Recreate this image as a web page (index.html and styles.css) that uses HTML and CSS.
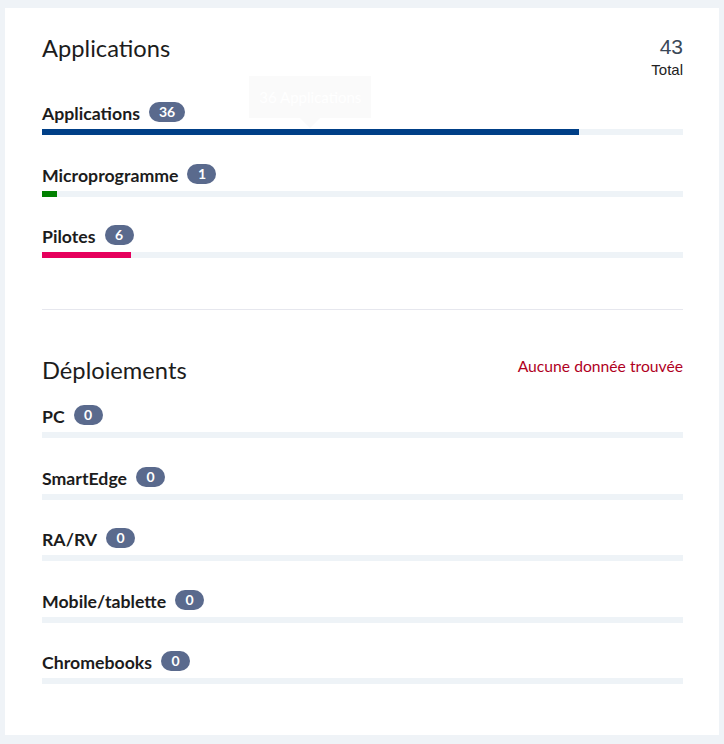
FILE: index.html
```html
<!DOCTYPE html>
<html lang="fr">
<head>
  <meta charset="UTF-8">
  <title>Applications</title>
  <link rel="stylesheet" href="styles.css">
</head>
<body>

  <div class="card">
    <section class="section section-apps">
      <div class="section-head">
        <h2>Applications</h2>
        <div class="stat">
          <div class="stat-value">43</div>
          <div class="stat-label">Total</div>
        </div>
      </div>

      <div class="rows">
        <div class="row">
          <div class="row-label">Applications <span class="badge">36</span></div>
          <div class="track">
            <div class="fill fill-blue" style="width: 83.72%">
              <div class="tooltip">36 Applications</div>
            </div>
          </div>
        </div>
        <div class="row">
          <div class="row-label">Microprogramme <span class="badge">1</span></div>
          <div class="track"><div class="fill fill-green" style="width: 2.33%"></div></div>
        </div>
        <div class="row">
          <div class="row-label">Pilotes <span class="badge">6</span></div>
          <div class="track"><div class="fill fill-pink" style="width: 13.95%"></div></div>
        </div>
      </div>
    </section>

    <section class="section section-deploy">
      <div class="section-head">
        <h2>Déploiements</h2>
        <div class="empty">Aucune donnée trouvée</div>
      </div>

      <div class="rows">
        <div class="row">
          <div class="row-label">PC <span class="badge">0</span></div>
          <div class="track"></div>
        </div>
        <div class="row">
          <div class="row-label">SmartEdge <span class="badge">0</span></div>
          <div class="track"></div>
        </div>
        <div class="row">
          <div class="row-label">RA/RV <span class="badge">0</span></div>
          <div class="track"></div>
        </div>
        <div class="row">
          <div class="row-label">Mobile/tablette <span class="badge">0</span></div>
          <div class="track"></div>
        </div>
        <div class="row">
          <div class="row-label">Chromebooks <span class="badge">0</span></div>
          <div class="track"></div>
        </div>
      </div>
    </section>
  </div>

</body>
</html>
```

FILE: styles.css
```css
* {
  box-sizing: border-box;
}

body {
  margin: 8px 5px;
  background: #eff3f7;
  font-family: 'Lato', 'Open Sans', sans-serif;
  color: #1c1c1c;
}

.card {
  background: #ffffff;
  box-shadow: 0 1px 4px rgba(0, 0, 0, 0.12);
  padding: 0 36px 51px 37px;
}

.section-apps {
  padding-top: 27px;
  padding-bottom: 51px;
  border-bottom: 1px solid #e6e7ee;
}

.section-deploy {
  padding-top: 47px;
}

.section-head {
  display: flex;
  justify-content: space-between;
  align-items: flex-start;
}

h2 {
  margin: 0;
  font-size: 23.7px;
  line-height: 26px;
  font-weight: 400;
  color: #1c1c1c;
}

.section-apps .section-head {
  margin-bottom: 25px;
}

.section-apps h2 {
  margin-top: 0;
}

.section-deploy .section-head {
  margin-bottom: 24px;
}

.stat {
  text-align: right;
  font-family: 'Liberation Sans', Arial, sans-serif;
}

.stat-value {
  font-size: 21px;
  line-height: 24px;
  color: #3a4858;
}

.stat-label {
  margin-top: 2px;
  font-size: 15px;
  line-height: 18px;
  color: #222;
}

.empty {
  margin-top: 1px;
  font-size: 15.7px;
  line-height: 17px;
  color: #b0001e;
}

.rows {
  display: flex;
  flex-direction: column;
  gap: 30.5px;
}

.row-label {
  display: flex;
  align-items: center;
  gap: 9px;
  height: 20px;
  font-size: 17.7px;
  line-height: 20px;
  font-weight: 700;
  color: #1c1c1c;
}

.badge {
  display: inline-block;
  min-width: 29px;
  height: 20px;
  padding: 0 10px;
  transform: translateY(-2px);
  border-radius: 10px;
  background: #5a6a8d;
  color: #ffffff;
  font-size: 14px;
  line-height: 20px;
  text-align: center;
}

.track {
  margin-top: 5px;
  height: 6px;
  background: #eef3f7;
}

.fill {
  position: relative;
  height: 100%;
}

.fill-blue {
  background: #003f87;
}

.fill-green {
  background: #008000;
}

.fill-pink {
  background: #e6005c;
}

.tooltip {
  position: absolute;
  left: 50%;
  bottom: 100%;
  margin-bottom: 11px;
  transform: translateX(-50%);
  padding: 11px 10px;
  background: #fafafa;
  color: #ffffff;
  font-size: 15px;
  line-height: 20px;
  white-space: nowrap;
}

.tooltip::after {
  content: "";
  position: absolute;
  top: 100%;
  left: 50%;
  margin-left: -10px;
  border-width: 10px 10px 0;
  border-style: solid;
  border-color: #fafafa transparent transparent;
}
```
